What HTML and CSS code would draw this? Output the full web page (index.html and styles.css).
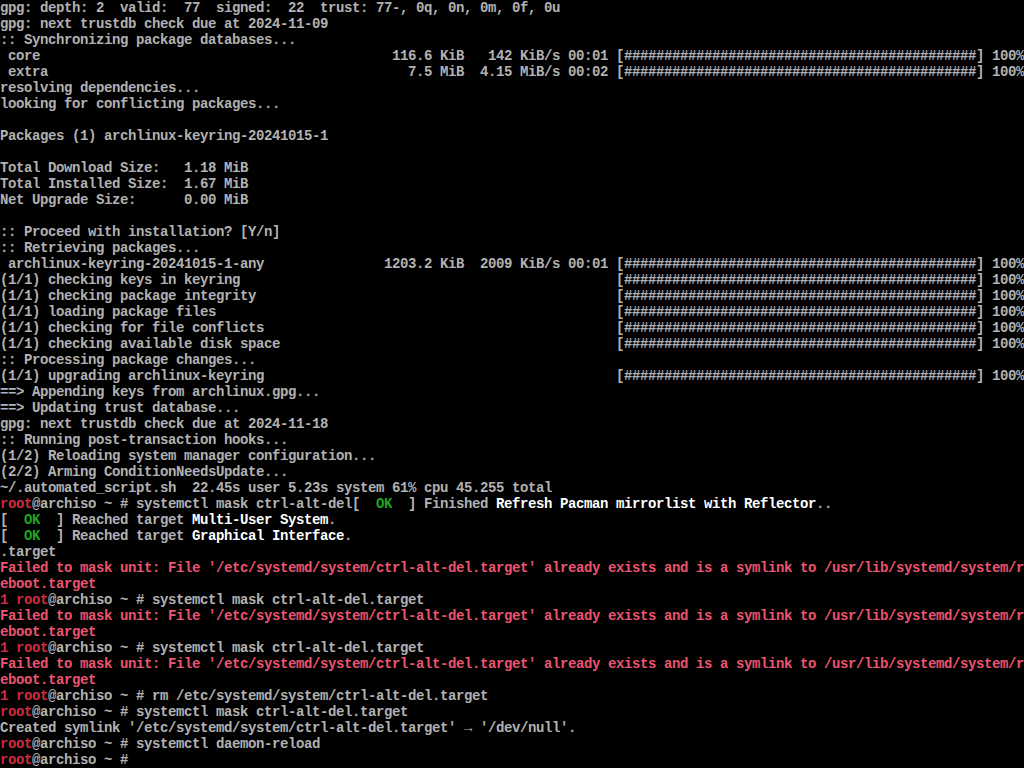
FILE: index.html
```html
<!DOCTYPE html>
<html lang="en">
<head>
<meta charset="utf-8">
<title>archiso console</title>
<link rel="stylesheet" href="styles.css">
</head>
<body>
<main class="console">
<div class="ln">gpg: depth: 2  valid:  77  signed:  22  trust: 77-, 0q, 0n, 0m, 0f, 0u</div>
<div class="ln">gpg: next trustdb check due at 2024-11-09</div>
<div class="ln">:: Synchronizing package databases...</div>
<div class="ln"> core                                            116.6 KiB   142 KiB/s 00:01 [############################################] 100%</div>
<div class="ln"> extra                                             7.5 MiB  4.15 MiB/s 00:02 [############################################] 100%</div>
<div class="ln">resolving dependencies...</div>
<div class="ln">looking for conflicting packages...</div>
<div class="ln"></div>
<div class="ln">Packages (1) archlinux-keyring-20241015-1</div>
<div class="ln"></div>
<div class="ln">Total Download Size:   1.18 MiB</div>
<div class="ln">Total Installed Size:  1.67 MiB</div>
<div class="ln">Net Upgrade Size:      0.00 MiB</div>
<div class="ln"></div>
<div class="ln">:: Proceed with installation? [Y/n]</div>
<div class="ln">:: Retrieving packages...</div>
<div class="ln"> archlinux-keyring-20241015-1-any               1203.2 KiB  2009 KiB/s 00:01 [############################################] 100%</div>
<div class="ln">(1/1) checking keys in keyring                                               [############################################] 100%</div>
<div class="ln">(1/1) checking package integrity                                             [############################################] 100%</div>
<div class="ln">(1/1) loading package files                                                  [############################################] 100%</div>
<div class="ln">(1/1) checking for file conflicts                                            [############################################] 100%</div>
<div class="ln">(1/1) checking available disk space                                          [############################################] 100%</div>
<div class="ln">:: Processing package changes...</div>
<div class="ln">(1/1) upgrading archlinux-keyring                                            [############################################] 100%</div>
<div class="ln">==&gt; Appending keys from archlinux.gpg...</div>
<div class="ln">==&gt; Updating trust database...</div>
<div class="ln">gpg: next trustdb check due at 2024-11-18</div>
<div class="ln">:: Running post-transaction hooks...</div>
<div class="ln">(1/2) Reloading system manager configuration...</div>
<div class="ln">(2/2) Arming ConditionNeedsUpdate...</div>
<div class="ln">~/.automated_script.sh  22.45s user 5.23s system 61% cpu 45.255 total</div>
<div class="ln"><span class="r">root</span>@archiso ~ # systemctl mask ctrl-alt-del[  <span class="g">OK</span>  ] Finished <span class="w">Refresh Pacman mirrorlist with Reflector</span>..</div>
<div class="ln">[  <span class="g">OK</span>  ] Reached target <span class="w">Multi-User System</span>.</div>
<div class="ln">[  <span class="g">OK</span>  ] Reached target <span class="w">Graphical Interface</span>.</div>
<div class="ln">.target</div>
<div class="ln e">Failed to mask unit: File '/etc/systemd/system/ctrl-alt-del.target' already exists and is a symlink to /usr/lib/systemd/system/r</div>
<div class="ln e">eboot.target</div>
<div class="ln"><span class="r">1 root</span>@archiso ~ # systemctl mask ctrl-alt-del.target</div>
<div class="ln e">Failed to mask unit: File '/etc/systemd/system/ctrl-alt-del.target' already exists and is a symlink to /usr/lib/systemd/system/r</div>
<div class="ln e">eboot.target</div>
<div class="ln"><span class="r">1 root</span>@archiso ~ # systemctl mask ctrl-alt-del.target</div>
<div class="ln e">Failed to mask unit: File '/etc/systemd/system/ctrl-alt-del.target' already exists and is a symlink to /usr/lib/systemd/system/r</div>
<div class="ln e">eboot.target</div>
<div class="ln"><span class="r">1 root</span>@archiso ~ # rm /etc/systemd/system/ctrl-alt-del.target</div>
<div class="ln"><span class="r">root</span>@archiso ~ # systemctl mask ctrl-alt-del.target</div>
<div class="ln">Created symlink '/etc/systemd/system/ctrl-alt-del.target' → '/dev/null'.</div>
<div class="ln"><span class="r">root</span>@archiso ~ # systemctl daemon-reload</div>
<div class="ln"><span class="r">root</span>@archiso ~ # </div>
</main>
</body>
</html>
```
FILE: styles.css
```css
html,
body {
  margin: 0;
  background: #000;
}

.console {
  display: flex;
  flex-direction: column;
  width: 1024px;
  height: 768px;
  overflow: hidden;
  background: #000;
  color: #b2b2b2;
  font-family: "Liberation Mono", "DejaVu Sans Mono", monospace;
  font-weight: bold;
  font-size: 14px;
  letter-spacing: -0.4014px;
  line-height: 16px;
}

.ln {
  flex: none;
  height: 16px;
  white-space: pre;
}

.r {
  color: #d02a40;
}

.e {
  color: #ec5470;
}

.g {
  color: #1ea51e;
}

.w {
  color: #ffffff;
}
```
